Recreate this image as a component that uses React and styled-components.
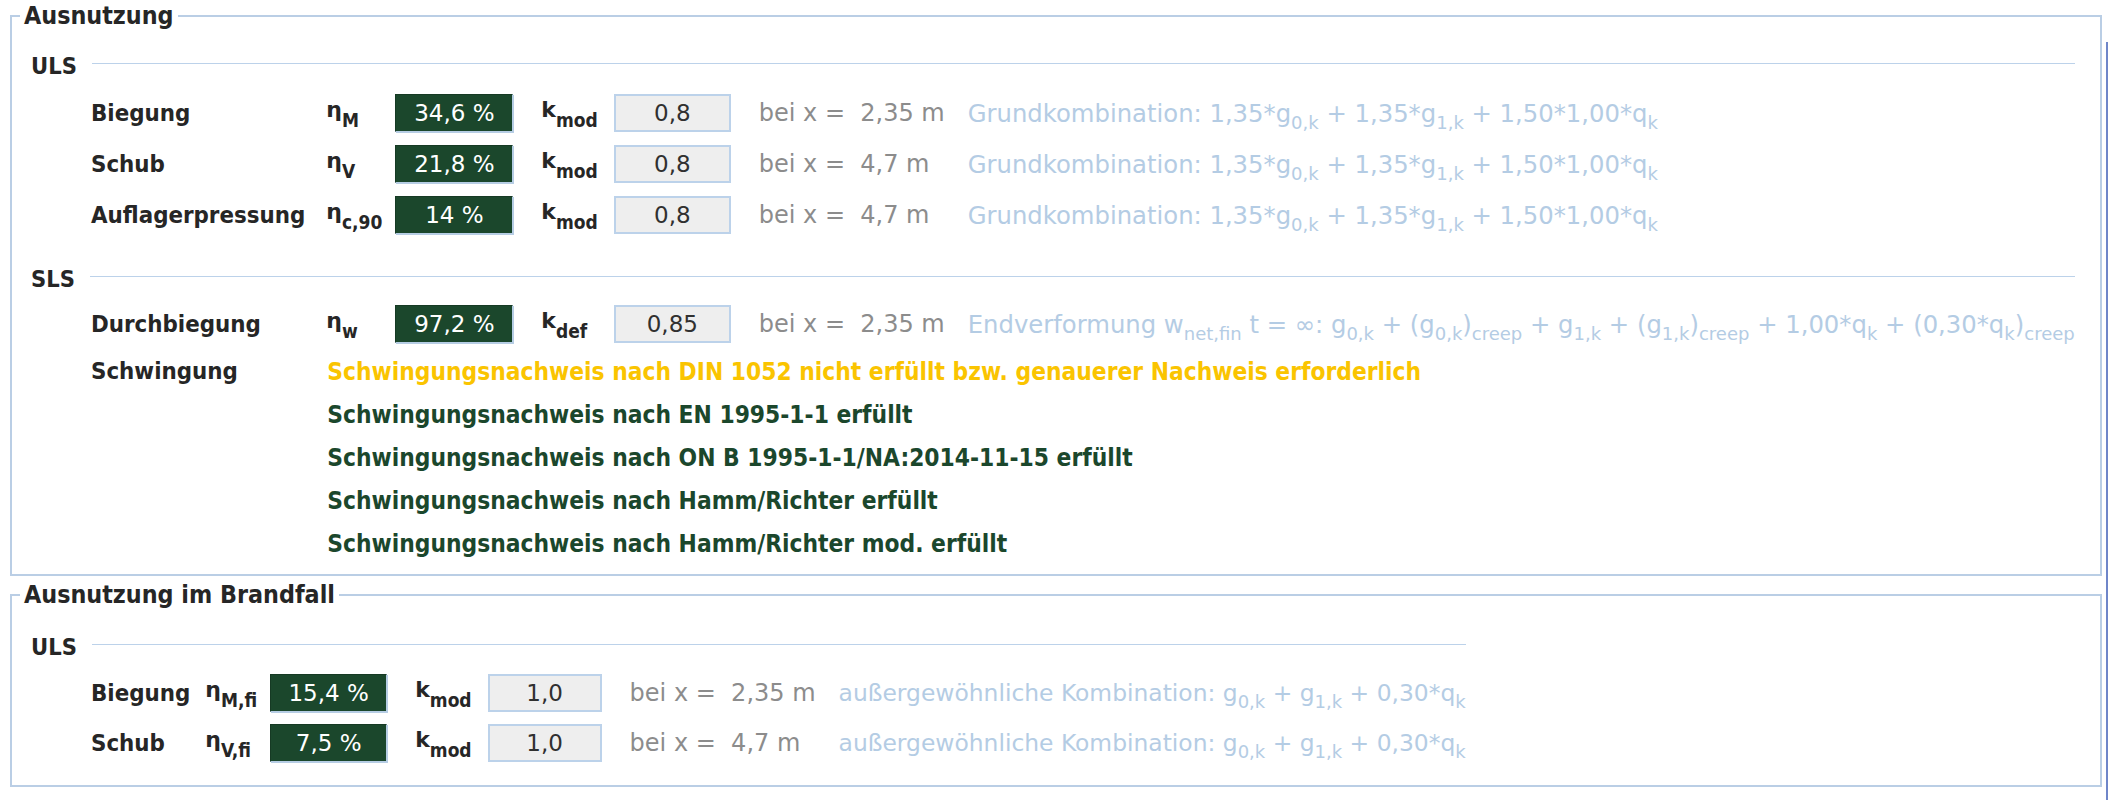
import React from 'react';
import styled, { createGlobalStyle } from 'styled-components';

const Global = createGlobalStyle`
  html, body { margin: 0; padding: 0; background: #ffffff; }
  body { font-family: "DejaVu Sans", "Liberation Sans", sans-serif; }
`;

const BOLD = `"DejaVu Sans Condensed", "DejaVu Sans", sans-serif`;
const REG = `"DejaVu Sans", "Liberation Sans", sans-serif`;

const Page = styled.div`
  display: flex;
  width: 2108px;
  height: 800px;
  box-sizing: border-box;
  padding: 2px 0 0 10px;
  background: #fff;
  overflow: hidden;
`;

const Main = styled.div`
  width: 2092px;
  flex: none;
  display: flex;
  flex-direction: column;
  gap: 5px;
`;

const EdgeStrip = styled.div`
  margin: 40px 0 0 4px;
  width: 0;
  border-left: 2px solid #6f86c9;
  border-top: 1px solid #6f86c9;
`;

const Box = styled.fieldset`
  margin: 0;
  padding: ${p => p.$pt}px 19px ${p => p.$pb}px 19px;
  border: 2px solid #bacee5;
  min-width: 0;
`;

const Legend = styled.legend`
  margin-left: -11px;
  padding: 0 4px;
  font-family: ${BOLD};
  font-stretch: condensed;
  font-weight: 700;
  font-size: 24.8px;
  line-height: 28px;
  color: #262626;
`;

const Grid = styled.div`
  display: inline-grid;
  grid-template-columns: 60px auto auto auto auto auto auto auto;
  row-gap: ${p => p.$rowGap}px;
  align-items: center;
`;

const Header = styled.div`
  grid-column: 1 / -1;
  height: 30px;
  display: flex;
  align-items: center;
  gap: 15px;
  margin-top: ${p => p.$mt || 0}px;
  margin-bottom: ${p => p.$mb || 0}px;
`;

const HeaderText = styled.span`
  font-family: ${BOLD};
  font-stretch: condensed;
  font-weight: 700;
  font-size: 23.5px;
  color: #262626;
`;

const HeaderLine = styled.div`
  flex: 1;
  height: 1px;
  background: #bcd2ea;
  margin-bottom: 6px;
`;

const Label = styled.div`
  grid-column: 2;
  font-family: ${BOLD};
  font-stretch: condensed;
  font-weight: 700;
  font-size: 23.8px;
  color: #262626;
  padding-right: ${p => p.$gap}px;
  white-space: nowrap;
`;

const Sym = styled.div`
  display: flex;
  justify-content: flex-start;
  align-items: baseline;
  margin-right: 13px;
  font-family: ${REG};
  font-weight: 700;
  font-size: 22px;
  color: #262626;
  white-space: nowrap;
  line-height: 1;
  padding-bottom: 6px;
`;

const SymSub = styled.span`
  position: relative;
  top: 10px;
  font-family: ${BOLD};
  font-stretch: condensed;
  font-size: 19px;
`;

const ValueBox = styled.div`
  width: ${p => p.$w}px;
  height: 38px;
  box-sizing: border-box;
  display: flex;
  align-items: center;
  justify-content: center;
  margin-right: 28px;
  font-family: ${REG};
  font-size: 23px;
  white-space: pre;
  ${p => p.$green ? `
    background: #1b472c;
    color: #ffffff;
    border: 1px solid #163a24;
    border-right-color: #b6cde4;
    border-bottom-color: #b6cde4;
    box-shadow: 1px 1px 0 #b6cde4;
  ` : `
    background: #eeeeee;
    color: #303030;
    border: 2px solid #bcd2ea;
  `}
`;

const KSym = styled(Sym)`
  margin-right: 16px;
`;

const Pos = styled.div`
  font-family: ${REG};
  font-size: 24px;
  color: #8c8c8c;
  white-space: pre;
  padding-right: 23px;
`;

const Formula = styled.div`
  font-family: ${REG};
  font-size: ${p => p.$size || 24.3}px;
  color: #b4cce4;
  white-space: pre;
`;

const FSub = styled.span`
  font-size: 18px;
  position: relative;
  top: 7px;
`;

const Note = styled.div`
  grid-column: 3 / -1;
  height: 30px;
  display: flex;
  align-items: center;
  padding-left: ${p => p.$indent}px;
  font-family: ${BOLD};
  font-stretch: condensed;
  font-weight: 700;
  font-size: 24.3px;
  color: ${p => (p.$warn ? '#fac400' : '#1b472c')};
  white-space: nowrap;
`;

const Grund = () => (
  <Formula>
    Grundkombination: 1,35*g<FSub>0,k</FSub> + 1,35*g<FSub>1,k</FSub> + 1,50*1,00*q<FSub>k</FSub>
  </Formula>
);

const Aussergew = () => (
  <Formula $size={23.4}>
    außergewöhnliche Kombination: g<FSub>0,k</FSub> + g<FSub>1,k</FSub> + 0,30*q<FSub>k</FSub>
  </Formula>
);

const Endverf = () => (
  <Formula>
    Endverformung w<FSub>net,fin</FSub> t = ∞: g<FSub>0,k</FSub> + (g<FSub>0,k</FSub>)<FSub>creep</FSub> + g<FSub>1,k</FSub> + (g<FSub>1,k</FSub>)<FSub>creep</FSub> + 1,00*q<FSub>k</FSub> + (0,30*q<FSub>k</FSub>)<FSub>creep</FSub>
  </Formula>
);

const Row = ({ label, gap, eta, value, k, kval, pos, formula, w1, w2 }) => (
  <>
    <Label $gap={gap}>{label}</Label>
    <Sym>η<SymSub>{eta}</SymSub></Sym>
    <ValueBox $green $w={w1}>{value}</ValueBox>
    <KSym>k<SymSub>{k}</SymSub></KSym>
    <ValueBox $w={w2}>{kval}</ValueBox>
    <Pos>{`bei x =  ${pos}`}</Pos>
    {formula}
  </>
);

export default function App() {
  return (
    <>
      <Global />
      <Page>
        <Main>
          <Box $pt={21} $pb={16}>
            <Legend>Ausnutzung</Legend>
            <Grid $rowGap={13}>
              <Header>
                <HeaderText>ULS</HeaderText>
                <HeaderLine />
              </Header>
              <Row label="Biegung" gap={21} eta="M" value="34,6 %" k="mod" kval="0,8" pos="2,35 m" formula={<Grund />} w1={118} w2={117} />
              <Row label="Schub" gap={21} eta="V" value="21,8 %" k="mod" kval="0,8" pos="4,7 m" formula={<Grund />} w1={118} w2={117} />
              <Row label="Auflagerpressung" gap={21} eta="c,90" value="14 %" k="mod" kval="0,8" pos="4,7 m" formula={<Grund />} w1={118} w2={117} />
              <Header $mt={17} $mb={-2}>
                <HeaderText>SLS</HeaderText>
                <HeaderLine />
              </Header>
              <Row label="Durchbiegung" gap={21} eta="w" value="97,2 %" k="def" kval="0,85" pos="2,35 m" formula={<Endverf />} w1={118} w2={117} />
              <Label $gap={21}>Schwingung</Label>
              <Note $warn $indent={1}>Schwingungsnachweis nach DIN 1052 nicht erfüllt bzw. genauerer Nachweis erforderlich</Note>
              <Note $indent={1}>Schwingungsnachweis nach EN 1995-1-1 erfüllt</Note>
              <Note $indent={1}>Schwingungsnachweis nach ON B 1995-1-1/NA:2014-11-15 erfüllt</Note>
              <Note $indent={1}>Schwingungsnachweis nach Hamm/Richter erfüllt</Note>
              <Note $indent={1}>Schwingungsnachweis nach Hamm/Richter mod. erfüllt</Note>
            </Grid>
          </Box>
          <Box $pt={23} $pb={23}>
            <Legend>Ausnutzung im Brandfall</Legend>
            <Grid $rowGap={12}>
              <Header>
                <HeaderText>ULS</HeaderText>
                <HeaderLine />
              </Header>
              <Row label="Biegung" gap={15} eta="M,fi" value="15,4 %" k="mod" kval="1,0" pos="2,35 m" formula={<Aussergew />} w1={117} w2={114} />
              <Row label="Schub" gap={15} eta="V,fi" value="7,5 %" k="mod" kval="1,0" pos="4,7 m" formula={<Aussergew />} w1={117} w2={114} />
            </Grid>
          </Box>
        </Main>
        <EdgeStrip />
      </Page>
    </>
  );
}
